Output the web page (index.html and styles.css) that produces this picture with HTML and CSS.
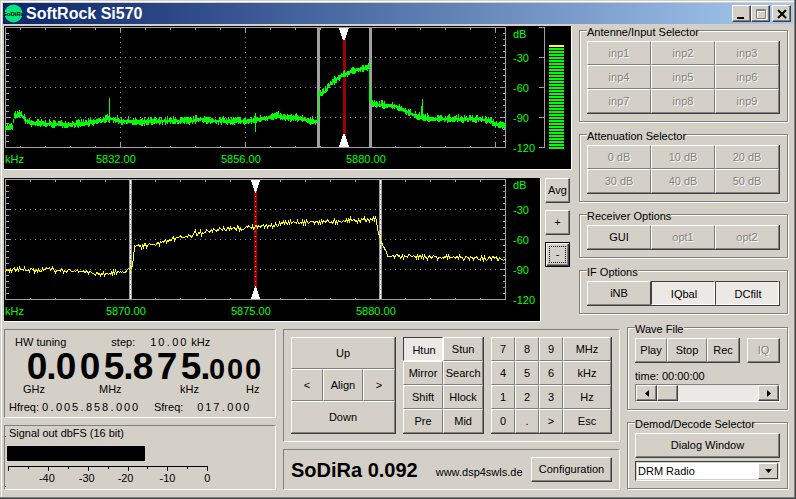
FILE: index.html
```
<!DOCTYPE HTML>
<html lang="en">
<head>
<meta charset="utf-8">
<title>SoftRock Si570</title>
<link rel="stylesheet" href="styles.css">
<script src="script.js"></script>
</head>

<body>
<div class="window">
	<header class="titlebar">
		<svg class="logo" viewBox="0 0 19 19" width="19" height="19">
			<circle cx="9.5" cy="9.5" r="9" fill="#00e67a"/>
			<text x="9.5" y="12" text-anchor="middle" font-size="6" font-weight="bold">SoDiRa</text>
		</svg>
		<h1>SoftRock Si570</h1>
		<div class="winbtns">
			<button type="button" aria-label="Minimize"><svg viewBox="0 0 14 12" width="14" height="12"><path d="M2 9h7v2H2z"/></svg></button>
			<button type="button" aria-label="Maximize" disabled><svg viewBox="0 0 14 12" width="14" height="12"><path d="M3.5 2.5h9v9h-9zM3 3.5h9" fill="none" stroke="#fff"/><path d="M2.5 1.500h9v9h-9zM2 2.500h9" fill="none" stroke="#808080"/></svg></button>
			<button type="button" class="close" aria-label="Close"><svg viewBox="0 0 14 12" width="14" height="12"><path d="M3 2l8 8M11 2l-8 8" fill="none" stroke="#000" stroke-width="2"/></svg></button>
		</div>
	</header>

	<main class="content">
		<div class="top">
			<div class="graphs">
				<svg class="graph" viewBox="4 26 567 143" shape-rendering="crispEdges">
					<!-- grid -->
					<g class="dots">
						<path d="M5 57.500H505M5 87.500H505M5 117.500H505"/>
						<path d="M120.500 27V147M245.500 27V147M370.500 27V147M495.500 27V147"/>
					</g>
					<g class="frame">
						<rect x="5.500" y="27.500" width="500" height="120"/>
						<path d="M5 57.500h6M5 87.500h6M5 117.500h6M500 57.500h6M500 87.500h6M500 117.500h6"/>
						<path d="M120.500 27v5M245.500 27v5M370.500 27v5M495.500 27v5M120.500 142v5M245.500 142v5M370.500 142v5M495.500 142v5"/>
						<path class="xtick" d="M20 28.500H505M20 146.500H505"/>
						<path class="ytick" d="M7 27V147M504 27V147"/>
					</g>
					<g class="filter"><path d="M318.500 28V147M370.500 28V147"/></g>
					<g class="tune"><path d="M344.500 39V136"/></g>
					<path class="trace green" id="wide"/>
					<path class="arrow" d="M339 28h10l-4 12h-2zM339 147h10l-4-13h-2z"/>
					<!-- level meter -->
					<g class="frame"><path d="M539 27.500h6M539 57.500h5M539 87.500h5M539 117.500h5M539 147.500h6M544.500 27V147"/></g>
					<path class="bars" d="M556.500 48V149"/>
					<rect x="549" y="45" width="15" height="2" fill="#ff0"/>
					<g class="labels">
						<text x="513" y="38">dB</text>
						<text x="513" y="62">-30</text>
						<text x="513" y="92">-60</text>
						<text x="513" y="122">-90</text>
						<text x="513" y="152">-120</text>
						<text x="5" y="163">kHz</text>
						<text x="96" y="163">5832.00</text>
						<text x="221" y="163">5856.00</text>
						<text x="346" y="163">5880.00</text>
					</g>
				</svg>
				<div class="zoomrow">
					<svg class="graph" viewBox="4 178 536 143" shape-rendering="crispEdges">
						<g class="dots"><path d="M5 209.500H505M5 239.500H505M5 269.500H505"/></g>
						<g class="frame">
							<rect x="5.500" y="179.500" width="500" height="120"/>
							<path d="M5 209.500h6M5 239.500h6M5 269.500h6M500 209.500h6M500 239.500h6M500 269.500h6"/>
							<path class="xtick" d="M30 180.500H505M30 298.500H505"/>
							<path class="ytick" d="M7 179V299M504 179V299"/>
						</g>
						<g class="filter"><path d="M130.500 180V299M380.500 180V299"/><path class="dotline" d="M130.500 180V299M380.500 180V299"/></g>
						<g class="tune"><path d="M255.500 191V288"/><path class="dotline" d="M255.500 191V288"/></g>
						<path class="trace yellow" id="narrow"/>
						<path class="arrow" d="M251 180h9l-4 13h-1zM251 299h9l-4-13h-1z"/>
						<g class="labels">
							<text x="513" y="189">dB</text>
							<text x="513" y="214">-30</text>
							<text x="513" y="244">-60</text>
							<text x="513" y="274">-90</text>
							<text x="513" y="304">-120</text>
							<text x="5" y="315">kHz</text>
							<text x="106" y="315">5870.00</text>
							<text x="231" y="315">5875.00</text>
							<text x="356" y="315">5880.00</text>
						</g>
					</svg>
					<div class="zoombtns">
						<button type="button" class="btn">Avg</button>
						<button type="button" class="btn">+</button>
						<button type="button" class="btn default"><span>-</span></button>
					</div>
				</div>
			</div>

			<div class="options">
				<fieldset class="group">
					<legend>Antenne/Input Selector</legend>
					<div class="keys cols3">
						<button type="button" disabled>inp1</button>
						<button type="button" disabled>inp2</button>
						<button type="button" disabled>inp3</button>
						<button type="button" disabled>inp4</button>
						<button type="button" disabled>inp5</button>
						<button type="button" disabled>inp6</button>
						<button type="button" disabled>inp7</button>
						<button type="button" disabled>inp8</button>
						<button type="button" disabled>inp9</button>
					</div>
				</fieldset>
				<fieldset class="group">
					<legend>Attenuation Selector</legend>
					<div class="keys cols3">
						<button type="button" disabled>0 dB</button>
						<button type="button" disabled>10 dB</button>
						<button type="button" disabled>20 dB</button>
						<button type="button" disabled>30 dB</button>
						<button type="button" disabled>40 dB</button>
						<button type="button" disabled>50 dB</button>
					</div>
				</fieldset>
				<fieldset class="group">
					<legend>Receiver Options</legend>
					<div class="keys cols3">
						<button type="button">GUI</button>
						<button type="button" disabled>opt1</button>
						<button type="button" disabled>opt2</button>
					</div>
				</fieldset>
				<fieldset class="group">
					<legend>IF Options</legend>
					<div class="keys cols3">
						<button type="button" class="last">iNB</button>
						<button type="button" class="on" aria-pressed="true">IQbal</button>
						<button type="button" class="on" aria-pressed="true">DCfilt</button>
					</div>
				</fieldset>
			</div>
		</div>

		<div class="bottom">
			<div class="column">
				<section class="panel tuning">
					<div class="line hw">
						<span>HW tuning</span>
						<span class="steplabel">step:</span>
						<span class="digits"><b>1</b><b>0</b><i>.</i><b>0</b><b>0</b></span>
						<span class="unit">kHz</span>
					</div>
					<div class="freq">
						<b>0</b><i>.</i><b>0</b><b>0</b><b>5</b><i>.</i><b>8</b><b>7</b><b>5</b><i>.</i><b class="small">0</b><b class="small">0</b><b class="small">0</b>
					</div>
					<div class="units">
						<span>GHz</span><span>MHz</span><span>kHz</span><span>Hz</span>
					</div>
					<div class="line sub">
						<span>Hfreq:</span>
						<span class="digits"><b>0</b><i>.</i><b>0</b><b>0</b><b>5</b><i>.</i><b>8</b><b>5</b><b>8</b><i>.</i><b>0</b><b>0</b><b>0</b></span>
						<span class="sfreq">Sfreq:</span>
						<span class="digits"><b>0</b><b>1</b><b>7</b><i>.</i><b>0</b><b>0</b><b>0</b></span>
					</div>
				</section>
				<section class="panel signal">
					<svg viewBox="4 426 271 63" shape-rendering="crispEdges">
						<path d="M4 436h1v1h-1zM4 486h1v1h-1z"/>
						<text x="8" y="437">Signal out dbFS (16 bit)</text>
						<rect x="6" y="446" width="139" height="15"/>
						<path class="scale" d="M7 466.500H208M7.500 466v5M27.500 466v3M47.500 466v5M67.500 466v3M87.500 466v5M107.500 466v3M127.500 466v5M147.500 466v3M167.500 466v5M187.500 466v3M207.500 466v5"/>
						<g text-anchor="middle">
							<text x="46" y="482">-40</text>
							<text x="86" y="482">-30</text>
							<text x="125" y="482">-20</text>
							<text x="167" y="482">-10</text>
							<text x="207" y="482">0</text>
						</g>
					</svg>
				</section>
			</div>

			<div class="column">
				<section class="panel controls">
					<div class="keys nav">
						<button type="button" class="wide">Up</button>
						<button type="button">&lt;</button>
						<button type="button">Align</button>
						<button type="button">&gt;</button>
						<button type="button" class="wide">Down</button>
					</div>
					<div class="keys modes">
						<button type="button" class="on" aria-pressed="true">Htun</button>
						<button type="button">Stun</button>
						<button type="button">Mirror</button>
						<button type="button">Search</button>
						<button type="button">Shift</button>
						<button type="button">Hlock</button>
						<button type="button">Pre</button>
						<button type="button">Mid</button>
					</div>
					<div class="keys numpad">
						<button type="button">7</button>
						<button type="button">8</button>
						<button type="button">9</button>
						<button type="button">MHz</button>
						<button type="button">4</button>
						<button type="button">5</button>
						<button type="button">6</button>
						<button type="button">kHz</button>
						<button type="button">1</button>
						<button type="button">2</button>
						<button type="button">3</button>
						<button type="button">Hz</button>
						<button type="button">0</button>
						<button type="button">.</button>
						<button type="button">&gt;</button>
						<button type="button">Esc</button>
					</div>
				</section>
				<section class="panel about">
					<h2>SoDiRa 0.092</h2>
					<span class="site">www.dsp4swls.de</span>
					<button type="button" class="btn config">Configuration</button>
				</section>
			</div>

			<div class="side">
				<fieldset class="group">
					<legend>Wave File</legend>
					<div class="wave">
						<div class="keys play">
							<button type="button">Play</button>
							<button type="button">Stop</button>
							<button type="button">Rec</button>
						</div>
						<button type="button" class="btn iq" disabled>IQ</button>
					</div>
					<label class="time" for="pos">time: 00:00:00</label>
					<div class="scroll">
						<button type="button" class="btn" aria-label="Back"><svg viewBox="0 0 4 7" width="4" height="7"><path d="M4 0v7L0 3.500z"/></svg></button>
						<input type="range" id="pos" min="0" max="100" value="0">
						<button type="button" class="btn" aria-label="Forward"><svg viewBox="0 0 4 7" width="4" height="7"><path d="M0 0v7l4-3.500z"/></svg></button>
					</div>
				</fieldset>
				<fieldset class="group">
					<legend>Demod/Decode Selector</legend>
					<button type="button" class="btn dialog">Dialog Window</button>
					<div class="combo">
						<select aria-label="Demod/Decode Selector"><option>DRM Radio</option></select>
						<span class="drop"><svg viewBox="0 0 7 4" width="7" height="4"><path d="M0 0h7L3.500 4z"/></svg></span>
					</div>
				</fieldset>
			</div>
		</div>
	</main>
</div>
</body>
</html>
```
FILE: styles.css
```
*{box-sizing:border-box;margin:0;padding:0;}
body{background:#d4d0c8;color:#000;font:11px/13px "Liberation Sans",Arial,sans-serif;}
button,select,input{font:inherit;color:inherit;}

.window{min-height:100vh;padding:3px 2px 8px 3px;border:solid;border-width:0 1px 1px 0;border-color:#404040;box-shadow:inset -1px -1px #808080,inset 1px 1px #d4d0c8,inset 2px 2px #fff;}

/* title bar */
.titlebar{display:flex;align-items:center;height:21px;padding:0 2px 0 1px;background:linear-gradient(to right,#0a246a,#a6caf0);}
.titlebar h1{flex:1;margin-left:3px;color:#fff;font-size:16px;line-height:20px;}
.winbtns{display:flex;}
.winbtns button{width:19px;height:17px;display:flex;align-items:center;justify-content:center;background:#d4d0c8;border:1px solid;border-color:#fff #404040 #404040 #fff;box-shadow:inset -1px -1px #808080;}
.winbtns .close{margin-left:2px;}

.content{padding:2px 5px 0 1px;}
.top{display:flex;gap:7px;}
.graphs{flex:1;display:flex;flex-direction:column;gap:8px;min-width:0;}
.options{width:209px;display:flex;flex-direction:column;gap:8px;}

/* spectrum */
.graph{display:block;width:100%;background:#000;border:solid #fff;border-width:0 1px 1px 0;}
.zoomrow{display:flex;gap:4px;}
.zoomrow .graph{flex:1;min-width:0;}
.zoombtns{width:27px;display:flex;flex-direction:column;gap:7px;}
.zoombtns .btn{width:25px;}
.frame *{fill:none;stroke:#a0a0a0;}
.frame .xtick{stroke-width:2;stroke-dasharray:1 24;}
.frame .ytick{stroke-width:3;stroke-dasharray:1 5;}
.dots path{fill:none;stroke:#909090;stroke-dasharray:1 4;}
.filter path{stroke:#a0a0a0;stroke-width:3;}
.filter .dotline{stroke:#fff;stroke-width:1;stroke-dasharray:4 1;}
.tune path{stroke:#a00000;stroke-width:3;}
.tune .dotline{stroke:#d08080;stroke-width:1;stroke-dasharray:1 4;}
.trace{fill:none;stroke-width:1;}
.green{stroke:#0f0;}
.yellow{stroke:#ff0;}
.arrow{fill:#fff;}
.bars{stroke:#0f0;stroke-width:15;stroke-dasharray:2 1;}
.labels{fill:#0f0;font-size:11px;}

/* groups and panels */
.group{min-width:0;padding:6px 7px 7px;border:1px solid #808080;box-shadow:1px 1px #fff,inset 1px 1px #fff;}
.group legend{height:9px;line-height:12px;background:#d4d0c8;}
.panel{border:1px solid;border-color:#808080 #fff #fff #808080;}

.btn{height:25px;background:#d4d0c8;border:1px solid;border-color:#fff #404040 #404040 #fff;box-shadow:inset -1px -1px #808080;text-align:center;white-space:nowrap;}
.default{padding:2px;border-color:#000;box-shadow:inset 1px 1px #fff,inset -1px -1px #404040,inset -2px -2px #808080;}
.default span{display:block;height:17px;line-height:15px;margin:0 1px;border:1px dotted #000;}

.keys{display:grid;grid-auto-rows:24px;border:solid #404040;border-width:0 1px 1px 0;}
.keys button{background:#d4d0c8;border:1px solid;border-color:#fff #808080 #808080 #fff;text-align:center;white-space:nowrap;}
.keys .on{padding:2px 0 0 2px;background:#ebe9e5;border-color:#404040 #fff #fff #404040;}
.keys .last{border-right-color:#404040;}
.cols3{grid-template-columns:repeat(3,1fr);}
button:disabled{color:#808080;text-shadow:1px 1px #fff;}

.bottom{display:grid;grid-template-columns:272px 1fr 161px;gap:7px;margin-top:1px;}
.column{display:flex;flex-direction:column;gap:7px;padding-top:6px;}
.side{display:flex;flex-direction:column;gap:8px;}

/* tuning */
.tuning{height:89px;padding:6px 0 0 4px;}
.line{display:flex;}
.digits{display:flex;}
.digits b,.freq b{font-weight:normal;width:8px;text-align:center;}
.digits i{font-style:normal;width:6px;text-align:center;}
.hw{padding-left:6px;}
.steplabel{margin:0 14px 0 45px;}
.unit{margin-left:4px;}
.freq{display:flex;align-items:baseline;height:34px;padding-left:16px;font-size:37px;line-height:36px;}
.freq b{width:24px;font-weight:bold;}
.freq i{width:5px;font-style:normal;font-weight:bold;display:flex;justify-content:center;}
.freq .small{width:18px;font-size:29px;}
.units{display:grid;grid-template-columns:76px 81px 66px auto;padding-left:14px;}
.sub{padding-top:5px;}
.sub .digits{margin-left:2px;}
.sfreq{margin:0 11px 0 15px;}

.signal{height:65px;}
.signal svg{display:block;width:100%;height:auto;}
.scale{stroke:#000;}

/* key blocks */
.controls{display:flex;gap:7px;height:113px;padding:7px;}
.nav{flex:105;grid-template-columns:4fr 5fr 4fr;grid-auto-rows:32px;}
.nav .wide{grid-column:span 3;}
.modes{flex:81;grid-template-columns:1fr 1fr;}
.numpad{flex:121;grid-template-columns:1fr 1fr 1fr 2fr;}

.about{display:flex;align-items:center;height:41px;padding:0 7px;}
.about h2{font-size:20px;line-height:24px;}
.site{flex:1;margin:5px 0 0 18px;}
.config{width:81px;}

/* wave file */
.wave{display:flex;justify-content:space-between;}
.play{width:105px;grid-template-columns:4fr 5fr 4fr;}
.iq{width:33px;}
.time{display:block;padding:7px 0 1px;}
.scroll{display:flex;height:18px;border:1px solid;border-color:#808080 #fff #fff #808080;}
.scroll .btn{width:21px;height:16px;display:flex;align-items:center;justify-content:center;}
.scroll input{flex:1;min-width:0;height:16px;appearance:none;-webkit-appearance:none;background:#ebe9e5;}
.scroll input::-webkit-slider-thumb{-webkit-appearance:none;width:21px;height:16px;background:#d4d0c8;border:1px solid;border-color:#fff #404040 #404040 #fff;box-shadow:inset -1px -1px #808080;}

.dialog{display:block;width:100%;}
.combo{position:relative;margin-top:3px;}
.combo select{display:block;width:100%;height:20px;padding-left:2px;appearance:none;-webkit-appearance:none;background:#fff;border:1px solid;border-color:#404040 #fff #fff #404040;border-radius:0;outline:1px solid #d4d0c8;outline-offset:-2px;}
.drop{position:absolute;top:2px;right:2px;width:20px;height:16px;display:flex;align-items:center;justify-content:center;background:#d4d0c8;border:1px solid;border-color:#fff #404040 #404040 #fff;pointer-events:none;}
```
FILE: script.js
```
window.onload=function(){
	var seed=7;
	function rnd(){
		seed=(seed*16807)%2147483647;
		return seed/2147483647;
	}

	//level between the two nearest points
	function level(pts,x){
		for(var i=1;i<pts.length;i++){
			if(x<=pts[i][0]){
				var a=pts[i-1],b=pts[i];
				return a[1]+(b[1]-a[1])*(x-a[0])/(b[0]-a[0]);
			}
		}
		return pts[pts.length-1][1];
	}

	var wide=[[5,127],[12,127],[14,116],[20,114],[25,120],[30,123],[50,124],[75,124],[95,122],[105,119],[113,119],[120,121],[140,122],[160,121],[190,121],[200,119],[215,121],[245,121],[255,120],[265,118],[275,116],[290,118],[300,118],[310,121],[317,121],[318,93],[323,93],[330,84],[337,78],[343,75],[355,70],[368,67],[369,67],[370,95],[372,104],[395,106],[405,111],[415,116],[425,118],[440,119],[480,119],[490,121],[495,124],[506,126]];
	var narrow=[[5,270],[20,269],[50,269],[80,271],[100,273],[120,272],[128,269],[131,267],[133,257],[134,245],[150,245],[160,242],[175,238],[200,232],[225,229],[250,227],[270,225],[290,222],[320,221],[350,220],[374,218],[376,219],[378,234],[381,242],[387,255],[400,256],[430,256],[460,257],[490,258],[500,259],[503,261],[505,258]];

	var d='',x,y,r;
	for(x=5;x<506;x++){
		r=rnd();
		y=level(wide,x);
		d+='M'+(x+0.5)+' '+Math.round(y-1-r*r*4)+'V'+Math.round(y+1+rnd()*3);
	}
	//carriers and filter edges
	d+='M109.5 98V119M255.5 113V132M422.5 99V118M421.5 106V118M318.5 93V121M369.5 66V100M370.5 90V104';
	document.getElementById('wide').setAttribute('d',d);

	d='';
	for(x=5;x<506;x++){
		y=level(narrow,x)+(rnd()+rnd()-1)*3;
		d+=(d?'L':'M')+(x+0.5)+' '+(Math.round(y)+0.5);
	}
	document.getElementById('narrow').setAttribute('d',d);
};
```
